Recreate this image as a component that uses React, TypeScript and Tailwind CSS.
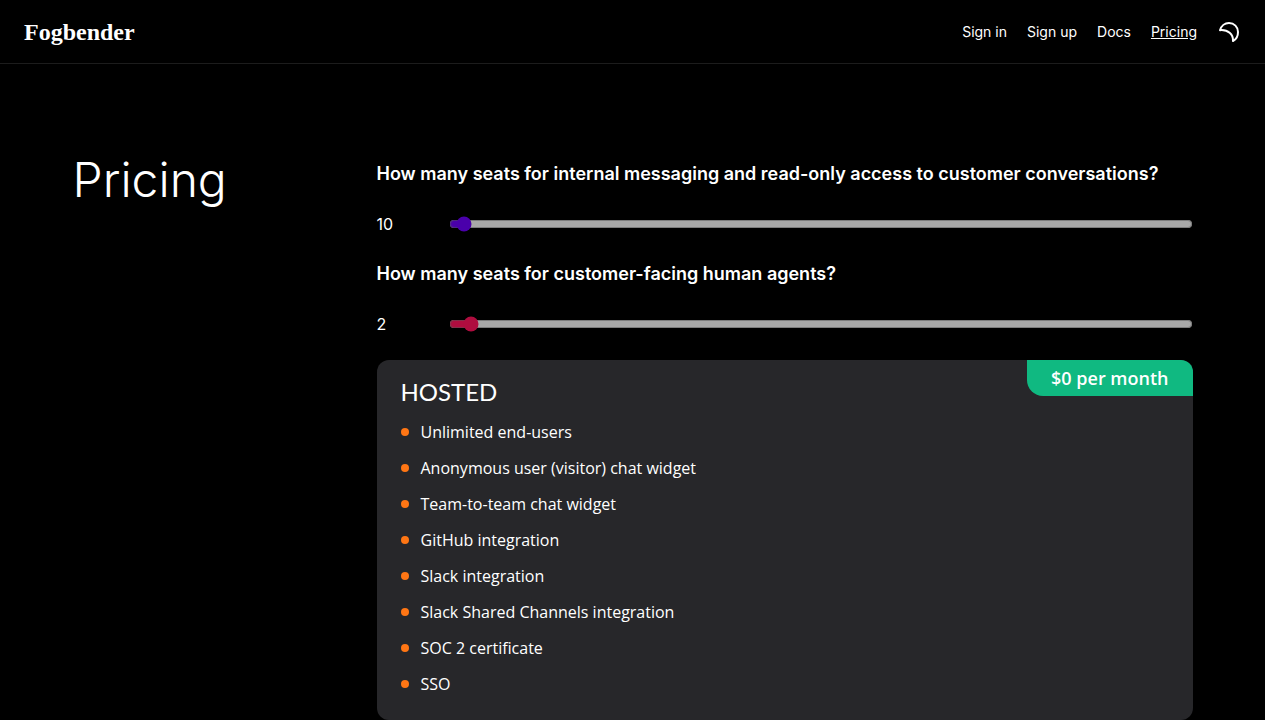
import { useState } from 'react';

interface NavLink {
  label: string;
  href: string;
  active?: boolean;
}

const NAV_LINKS: NavLink[] = [
  { label: 'Sign in', href: '#signin' },
  { label: 'Sign up', href: '#signup' },
  { label: 'Docs', href: '#docs' },
  { label: 'Pricing', href: '#pricing', active: true },
];

const FEATURES = [
  'Unlimited end-users',
  'Anonymous user (visitor) chat widget',
  'Team-to-team chat widget',
  'GitHub integration',
  'Slack integration',
  'Slack Shared Channels integration',
  'SOC 2 certificate',
  'SSO',
];

function Header() {
  return (
    <header className="h-16 flex items-center justify-between px-6 border-b border-[#1c1c1c]">
      <a href="#home" className="font-['Liberation_Serif',serif] text-2xl font-bold">
        Fogbender
      </a>
      <nav className="flex items-center gap-5 text-sm">
        {NAV_LINKS.map((link) => (
          <a key={link.label} href={link.href} className={link.active ? 'underline' : ''}>
            {link.label}
          </a>
        ))}
        <button type="button" aria-label="Toggle theme" className="w-6 h-6">
          <svg className="w-6 h-6" viewBox="0 0 24 24" fill="none" stroke="currentColor" strokeWidth={2} strokeLinejoin="round">
            <path d="M3 10.2C4.2 6 7.8 3 12 3C17.2 3 21 7 21 12C21 16 19.2 19.4 16 21C16.4 14.5 11 9.4 3 10.2Z" />
          </svg>
        </button>
      </nav>
    </header>
  );
}

interface SeatSliderProps {
  id: string;
  label: string;
  value: number;
  max: number;
  accent: string;
  onChange: (value: number) => void;
}

function SeatSlider({ id, label, value, max, accent, onChange }: SeatSliderProps) {
  return (
    <div className="mb-6">
      <label htmlFor={id} className="block text-lg font-semibold">
        {label}
      </label>
      <div className="flex items-center mt-6 h-6">
        <output htmlFor={id} className="w-18 shrink-0">
          {value}
        </output>
        <input
          id={id}
          type="range"
          min={0}
          max={max}
          value={value}
          onChange={(e) => onChange(parseInt(e.target.value))}
          className={`grow min-w-0 opacity-70 ${accent}`}
        />
      </div>
    </div>
  );
}

export default function App() {
  const [readerSeats, setReaderSeats] = useState(10);
  const [agentSeats, setAgentSeats] = useState(2);

  return (
    <div className="bg-white pr-[15px]">
      <div className="min-h-screen bg-black text-white font-['Inter',sans-serif]">
        <Header />
        <main className="max-w-[1120px] mx-auto pt-24 grid grid-cols-[304px_1fr]">
          <h1 className="text-5xl font-light leading-10">Pricing</h1>
          <div>
            <SeatSlider
              id="reader-seats"
              label="How many seats for internal messaging and read-only access to customer conversations?"
              value={readerSeats}
              max={1000}
              accent="accent-[#6a00f4]"
              onChange={setReaderSeats}
            />
            <SeatSlider
              id="agent-seats"
              label="How many seats for customer-facing human agents?"
              value={agentSeats}
              max={100}
              accent="accent-[#fa135a]"
              onChange={setAgentSeats}
            />

            {/* Hosted plan */}
            <section className="relative rounded-xl bg-zinc-800 px-6 pt-4 pb-6 overflow-hidden">
              <div className="absolute top-0 right-0 rounded-bl-2xl bg-[#10b981] px-6 py-1 font-['Open_Sans',sans-serif] text-lg font-semibold">
                $0 per month
              </div>
              <h2 className="font-['Lato',sans-serif] text-2xl">HOSTED</h2>
              <ul className="mt-3 space-y-3 font-['Open_Sans',sans-serif]">
                {FEATURES.map((feature) => (
                  <li key={feature} className="flex items-center gap-3">
                    <span className="w-2 h-2 rounded-full bg-[#ff7614]" />
                    {feature}
                  </li>
                ))}
              </ul>
            </section>
          </div>
        </main>
      </div>
    </div>
  );
}
